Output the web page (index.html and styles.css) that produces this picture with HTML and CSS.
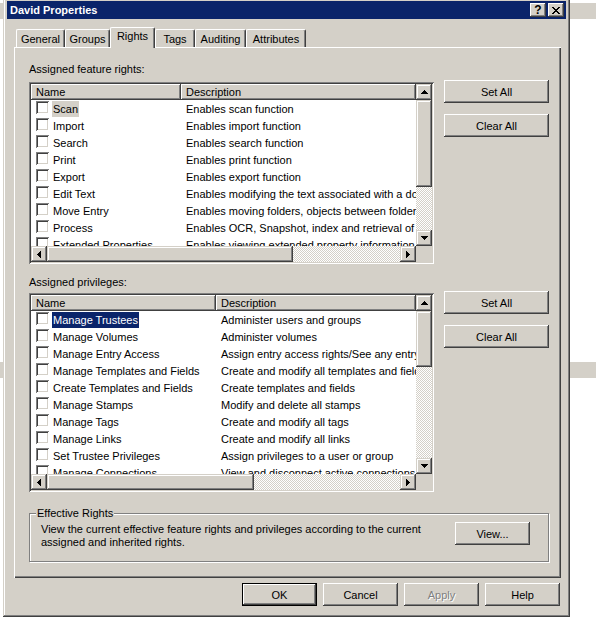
FILE: index.html
```html
<!DOCTYPE html>
<html lang="en">
<head>
    <meta charset="UTF-8">
    <title>David Properties</title>
    <link rel="stylesheet" href="styles.css">
</head>
<body>
    <div class="dialog">
        <div class="titlebar">
            <span class="title">David Properties</span>
            <div class="caption-buttons">
                <span class="caption-btn help-glyph">?</span>
                <span class="caption-btn">
                    <svg width="8" height="7" viewBox="0 0 8 7" shape-rendering="crispEdges"><path d="M0 0h2v1h1v1h2V1h1V0h2v1H7v1H6v1H5v1h1v1h1v1h1v1H6V6H5V5H3v1H2v1H0V6h1V5h1V4h1V3H2V2H1V1H0z"/></svg>
                </span>
            </div>
        </div>

        <div class="tabs">
            <div class="tab tab-general">General</div>
            <div class="tab tab-groups">Groups</div>
            <div class="tab tab-rights selected">Rights</div>
            <div class="tab tab-tags">Tags</div>
            <div class="tab tab-auditing">Auditing</div>
            <div class="tab tab-attributes">Attributes</div>
        </div>

        <div class="tab-panel">
            <div class="label">Assigned feature rights:</div>
            <div class="section-row">
                <div class="listview rights-list">
                    <div class="lv-content">
                        <div class="lv-header">
                            <div class="lv-col col-name">Name</div>
                            <div class="lv-col col-desc">Description</div>
                        </div>
                        <div class="lv-row"><div class="cell-name"><span class="checkbox"></span><span class="item-text inactive">Scan</span></div><div class="cell-desc">Enables scan function</div></div>
                        <div class="lv-row"><div class="cell-name"><span class="checkbox"></span><span class="item-text">Import</span></div><div class="cell-desc">Enables import function</div></div>
                        <div class="lv-row"><div class="cell-name"><span class="checkbox"></span><span class="item-text">Search</span></div><div class="cell-desc">Enables search function</div></div>
                        <div class="lv-row"><div class="cell-name"><span class="checkbox"></span><span class="item-text">Print</span></div><div class="cell-desc">Enables print function</div></div>
                        <div class="lv-row"><div class="cell-name"><span class="checkbox"></span><span class="item-text">Export</span></div><div class="cell-desc">Enables export function</div></div>
                        <div class="lv-row"><div class="cell-name"><span class="checkbox"></span><span class="item-text">Edit Text</span></div><div class="cell-desc">Enables modifying the text associated with a document</div></div>
                        <div class="lv-row"><div class="cell-name"><span class="checkbox"></span><span class="item-text">Move Entry</span></div><div class="cell-desc">Enables moving folders, objects between folders and volumes</div></div>
                        <div class="lv-row"><div class="cell-name"><span class="checkbox"></span><span class="item-text">Process</span></div><div class="cell-desc">Enables OCR, Snapshot, index and retrieval of text</div></div>
                        <div class="lv-row"><div class="cell-name"><span class="checkbox"></span><span class="item-text">Extended Properties</span></div><div class="cell-desc">Enables viewing extended property information</div></div>
                    </div>
                    <div class="vscroll">
                        <span class="sb-btn"><svg width="7" height="4" viewBox="0 0 7 4" shape-rendering="crispEdges"><path d="M3 0h1v1h1v1h1v1h1v1H0V3h1V2h1V1h1z"/></svg></span>
                        <span class="sb-thumb" style="height: 87px"></span>
                        <span class="sb-track"></span>
                        <span class="sb-btn"><svg width="7" height="4" viewBox="0 0 7 4" shape-rendering="crispEdges"><path d="M0 0h7v1H6v1H5v1H4v1H3V3H2V2H1V1H0z"/></svg></span>
                    </div>
                    <div class="hscroll">
                        <span class="sb-btn"><svg width="4" height="7" viewBox="0 0 4 7" shape-rendering="crispEdges"><path d="M3 0h1v7H3V6H2V5H1V4H0V3h1V2h1V1h1z"/></svg></span>
                        <span class="sb-thumb" style="width: 246px"></span>
                        <span class="sb-track"></span>
                        <span class="sb-btn"><svg width="4" height="7" viewBox="0 0 4 7" shape-rendering="crispEdges"><path d="M0 0h1v1h1v1h1v1h1v1H3v1H2v1H1v1H0z"/></svg></span>
                    </div>
                    <div class="sb-corner"></div>
                </div>
                <div class="side-buttons">
                    <button class="btn">Set All</button>
                    <button class="btn">Clear All</button>
                </div>
            </div>

            <div class="label label-second">Assigned privileges:</div>
            <div class="section-row section-row-second">
                <div class="listview privileges-list">
                    <div class="lv-content">
                        <div class="lv-header">
                            <div class="lv-col col-name">Name</div>
                            <div class="lv-col col-desc">Description</div>
                        </div>
                        <div class="lv-row"><div class="cell-name"><span class="checkbox"></span><span class="item-text active">Manage Trustees</span></div><div class="cell-desc">Administer users and groups</div></div>
                        <div class="lv-row"><div class="cell-name"><span class="checkbox"></span><span class="item-text">Manage Volumes</span></div><div class="cell-desc">Administer volumes</div></div>
                        <div class="lv-row"><div class="cell-name"><span class="checkbox"></span><span class="item-text">Manage Entry Access</span></div><div class="cell-desc">Assign entry access rights/See any entry</div></div>
                        <div class="lv-row"><div class="cell-name"><span class="checkbox"></span><span class="item-text">Manage Templates and Fields</span></div><div class="cell-desc">Create and modify all templates and fields</div></div>
                        <div class="lv-row"><div class="cell-name"><span class="checkbox"></span><span class="item-text">Create Templates and Fields</span></div><div class="cell-desc">Create templates and fields</div></div>
                        <div class="lv-row"><div class="cell-name"><span class="checkbox"></span><span class="item-text">Manage Stamps</span></div><div class="cell-desc">Modify and delete all stamps</div></div>
                        <div class="lv-row"><div class="cell-name"><span class="checkbox"></span><span class="item-text">Manage Tags</span></div><div class="cell-desc">Create and modify all tags</div></div>
                        <div class="lv-row"><div class="cell-name"><span class="checkbox"></span><span class="item-text">Manage Links</span></div><div class="cell-desc">Create and modify all links</div></div>
                        <div class="lv-row"><div class="cell-name"><span class="checkbox"></span><span class="item-text">Set Trustee Privileges</span></div><div class="cell-desc">Assign privileges to a user or group</div></div>
                        <div class="lv-row"><div class="cell-name"><span class="checkbox"></span><span class="item-text">Manage Connections</span></div><div class="cell-desc">View and disconnect active connections</div></div>
                    </div>
                    <div class="vscroll">
                        <span class="sb-btn"><svg width="7" height="4" viewBox="0 0 7 4" shape-rendering="crispEdges"><path d="M3 0h1v1h1v1h1v1h1v1H0V3h1V2h1V1h1z"/></svg></span>
                        <span class="sb-thumb" style="height: 56px"></span>
                        <span class="sb-track"></span>
                        <span class="sb-btn"><svg width="7" height="4" viewBox="0 0 7 4" shape-rendering="crispEdges"><path d="M0 0h7v1H6v1H5v1H4v1H3V3H2V2H1V1H0z"/></svg></span>
                    </div>
                    <div class="hscroll">
                        <span class="sb-btn"><svg width="4" height="7" viewBox="0 0 4 7" shape-rendering="crispEdges"><path d="M3 0h1v7H3V6H2V5H1V4H0V3h1V2h1V1h1z"/></svg></span>
                        <span class="sb-thumb" style="width: 207px"></span>
                        <span class="sb-track"></span>
                        <span class="sb-btn"><svg width="4" height="7" viewBox="0 0 4 7" shape-rendering="crispEdges"><path d="M0 0h1v1h1v1h1v1h1v1H3v1H2v1H1v1H0z"/></svg></span>
                    </div>
                    <div class="sb-corner"></div>
                </div>
                <div class="side-buttons">
                    <button class="btn">Set All</button>
                    <button class="btn">Clear All</button>
                </div>
            </div>

            <div class="group">
                <span class="group-title">Effective Rights</span>
                <div class="group-body">
                    <p class="group-text">View the current effective feature rights and privileges according to the current<br>assigned and inherited rights.</p>
                    <button class="btn btn-view">View...</button>
                </div>
            </div>
        </div>

        <div class="dialog-buttons">
            <button class="btn btn-small btn-default">OK</button>
            <button class="btn btn-small">Cancel</button>
            <button class="btn btn-small" disabled>Apply</button>
            <button class="btn btn-small">Help</button>
        </div>
    </div>
</body>
</html>
```

FILE: styles.css
```css
* {
    box-sizing: border-box;
    margin: 0;
    padding: 0;
}
body {
    width: 596px;
    height: 622px;
    overflow: hidden;
    font-family: "Liberation Sans", Arial, sans-serif;
    font-size: 11px;
    color: #000;
    background:
        linear-gradient(#d4d0c8, #d4d0c8) 0 362px / 100% 16px no-repeat,
        linear-gradient(#d4d0c8, #d4d0c8) 0 3px / 100% 16px no-repeat,
        #fff;
}
.dialog {
    width: 567px;
    height: 620px;
    margin: -3px 0 0 3px;
    padding: 4px;
    background: #d4d0c8;
    box-shadow: inset -1px -1px #404040, inset 1px 1px #d4d0c8, inset -2px -2px #808080, inset 2px 2px #fff;
}
.titlebar {
    height: 18px;
    display: flex;
    align-items: center;
    justify-content: space-between;
    padding: 0 2px 0 3px;
    background: #0a246a;
    color: #fff;
    font-weight: bold;
}
.caption-buttons {
    display: flex;
    gap: 2px;
}
.caption-btn {
    width: 16px;
    height: 14px;
    display: flex;
    align-items: center;
    justify-content: center;
    background: #d4d0c8;
    color: #000;
    box-shadow: inset -1px -1px #404040, inset 1px 1px #fff, inset -2px -2px #808080;
}
.help-glyph {
    font-size: 12px;
    font-weight: bold;
    line-height: 14px;
}

/* tabs */
.tabs {
    display: flex;
    align-items: flex-end;
    height: 20px;
    margin: 8px 0 0 9px;
    position: relative;
    z-index: 1;
}
.tab {
    height: 18px;
    line-height: 18px;
    text-align: center;
    border-top: 1px solid #fff;
    border-left: 1px solid #fff;
    border-right: 1px solid #404040;
    border-top-left-radius: 2px;
    border-top-right-radius: 2px;
    box-shadow: inset -1px 0 #808080;
}
.tab-general { width: 49px; }
.tab-groups { width: 45px; }
.tab-rights { width: 45px; }
.tab-tags { width: 40px; }
.tab-auditing { width: 51px; }
.tab-attributes { width: 60px; }
.tab.selected {
    height: 21px;
    margin-bottom: -1px;
    line-height: 17px;
    background: #d4d0c8;
}

.tab-panel {
    height: 531px;
    margin: 0 5px 0 7px;
    padding: 16px 12px 16px 15px;
    box-shadow: inset 1px 1px #fff, inset -1px -1px #404040, inset -2px -2px #808080;
}
.label {
    line-height: 13px;
}
.label-second {
    margin-top: 12px;
}
.section-row {
    display: grid;
    grid-template-columns: 405px 105px;
    column-gap: 10px;
    margin-top: 6px;
}
.section-row-second {
    margin-top: 4px;
}
.side-buttons {
    display: flex;
    flex-direction: column;
    gap: 11px;
    margin-top: -2px;
}

/* buttons */
.btn {
    width: 105px;
    height: 23px;
    border: 0;
    background: #d4d0c8;
    font: inherit;
    color: #000;
    box-shadow: inset -1px -1px #404040, inset 1px 1px #fff, inset -2px -2px #808080;
}
.btn-small {
    width: 75px;
}
.btn-default {
    box-shadow: inset 0 0 0 1px #000, inset -2px -2px #404040, inset 2px 2px #fff, inset -3px -3px #808080;
}
.btn:disabled {
    color: #808080;
    text-shadow: 1px 1px #fff;
}
.dialog-buttons {
    display: flex;
    justify-content: flex-end;
    gap: 6px;
    margin: 5px 6px 0 0;
}

/* list views */
.listview {
    display: grid;
    grid-template-columns: 1fr 16px;
    grid-template-rows: 1fr 16px;
    padding: 2px;
    background: #fff;
    box-shadow: inset 1px 1px #808080, inset -1px -1px #fff, inset 2px 2px #404040, inset -2px -2px #d4d0c8;
}
.rights-list {
    height: 182px;
}
.privileges-list {
    height: 199px;
}
.lv-content {
    overflow: hidden;
    min-width: 0;
    min-height: 0;
}
.lv-header {
    display: flex;
    height: 16px;
}
.lv-col {
    height: 16px;
    line-height: 17px;
    padding-left: 5px;
    background: #d4d0c8;
    white-space: nowrap;
    box-shadow: inset -1px -1px #404040, inset 1px 1px #fff, inset -2px -2px #808080;
}
.col-desc {
    flex: 1;
}
.rights-list .col-name,
.rights-list .cell-name {
    width: 150px;
}
.privileges-list .col-name,
.privileges-list .cell-name {
    width: 185px;
}
.lv-row {
    display: flex;
    height: 17px;
    padding-top: 1px;
    white-space: nowrap;
}
.cell-name {
    flex-shrink: 0;
    display: flex;
    align-items: flex-start;
    padding-left: 5px;
}
.checkbox {
    flex-shrink: 0;
    width: 13px;
    height: 13px;
    margin: 0 3px 0 0;
    background: #fff;
    box-shadow: inset 1px 1px #808080, inset -1px -1px #fff, inset 2px 2px #404040, inset -2px -2px #d4d0c8;
}
.item-text {
    padding: 0 1px;
    line-height: 16px;
}
.item-text.inactive {
    background: #d4d0c8;
}
.item-text.active {
    background: #0a246a;
    color: #fff;
}
.cell-desc {
    padding-left: 5px;
    line-height: 16px;
}

/* scrollbars */
.vscroll,
.hscroll {
    display: flex;
    background: repeating-conic-gradient(#d4d0c8 0 25%, #fff 0 50%) 0 0 / 2px 2px;
}
.vscroll {
    flex-direction: column;
}
.sb-btn {
    flex-shrink: 0;
    width: 16px;
    height: 16px;
    display: flex;
    align-items: center;
    justify-content: center;
    background: #d4d0c8;
    box-shadow: inset -1px -1px #404040, inset 1px 1px #d4d0c8, inset -2px -2px #808080, inset 2px 2px #fff;
}
.sb-thumb {
    flex-shrink: 0;
    width: 16px;
    height: 16px;
    background: #d4d0c8;
    box-shadow: inset -1px -1px #404040, inset 1px 1px #d4d0c8, inset -2px -2px #808080, inset 2px 2px #fff;
}
.sb-track {
    flex: 1;
}
.sb-corner {
    background: #d4d0c8;
}

/* effective rights group */
.group {
    position: relative;
    height: 49px;
    margin-top: 21px;
    border: 1px solid #808080;
    box-shadow: inset 1px 1px #fff, 1px 1px #fff;
    padding: 8px 18px 0 11px;
}
.group-title {
    position: absolute;
    top: -7px;
    left: 6px;
    padding: 0 1px;
    line-height: 13px;
    background: #d4d0c8;
}
.group-body {
    display: flex;
    justify-content: space-between;
    align-items: flex-start;
}
.group-text {
    margin-top: 1px;
    line-height: 13px;
    white-space: nowrap;
}
.btn-view {
    width: 75px;
}
```
